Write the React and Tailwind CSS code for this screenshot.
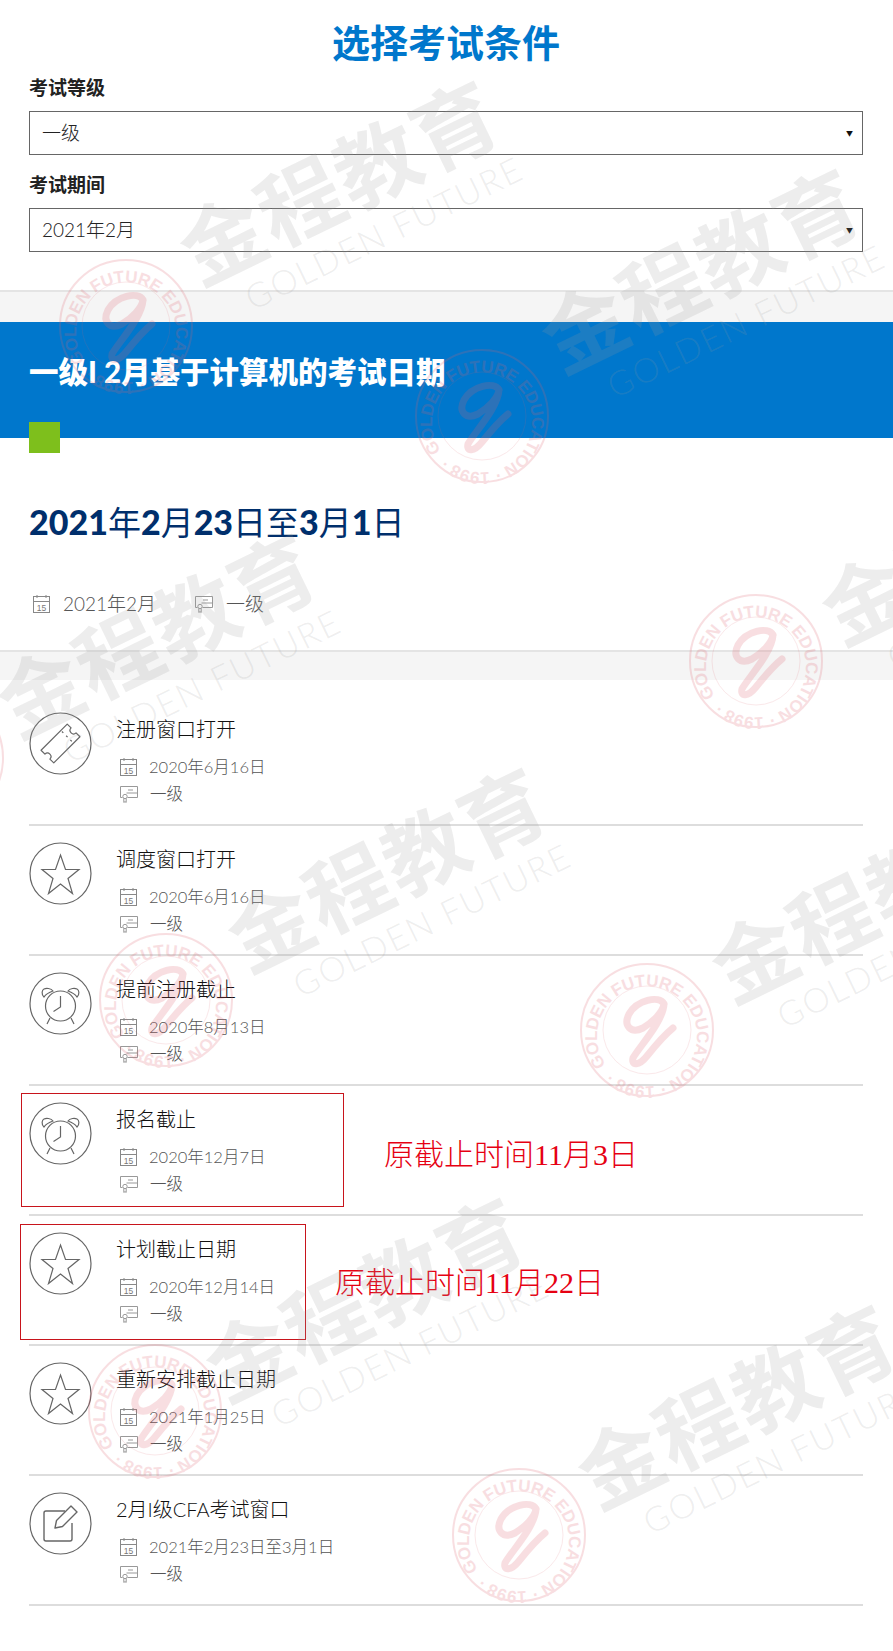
import React from "react";

const rows = [
  { icon: "ticket", title: "注册窗口打开", date: "2020年6月16日" },
  { icon: "star", title: "调度窗口打开", date: "2020年6月16日" },
  { icon: "alarm", title: "提前注册截止", date: "2020年8月13日" },
  { icon: "alarm", title: "报名截止", date: "2020年12月7日" },
  { icon: "star", title: "计划截止日期", date: "2020年12月14日" },
  { icon: "star", title: "重新安排截止日期", date: "2021年1月25日" },
  { icon: "edit", title: "2月I级CFA考试窗口", date: "2021年2月23日至3月1日" },
];

const marks = [
  "left-[348px] top-[200px]",
  "left-[710px] top-[288px]",
  "left-[166px] top-[653px]",
  "left-[396px] top-[887px]",
  "left-[990px] top-[560px]",
  "left-[880px] top-[918px]",
  "left-[374px] top-[1317px]",
  "left-[746px] top-[1424px]",
];

const stamps = [
  "left-[58px] top-[258px]",
  "left-[414px] top-[348px]",
  "left-[688px] top-[593px]",
  "left-[-131px] top-[690px]",
  "left-[98px] top-[932px]",
  "left-[579px] top-[962px]",
  "left-[87px] top-[1343px]",
  "left-[451px] top-[1467px]",
];

const CalendarIcon = () => (
  <svg width="19" height="20" viewBox="0 0 19 20" fill="none" stroke="#888" strokeWidth="1" className="shrink-0">
    <rect x="1.5" y="2.5" width="16" height="16" />
    <path d="M1.5 7.5h16M5 1v3M14 1v3" />
    <text x="9.5" y="16.500" fontSize="8.500" textAnchor="middle" fill="#777" stroke="none" fontFamily="Liberation Sans, sans-serif">15</text>
  </svg>
);

const CertIcon = () => (
  <svg width="20" height="18" viewBox="0 0 20 18" fill="none" stroke="#999" strokeWidth="1" className="shrink-0">
    <path d="M3.500 12.500H1.500V1.500h17v11H8.500" />
    <path d="M9 5h5M7.500 8h11" />
    <circle cx="6" cy="11.500" r="2.200" />
    <path d="M4.800 13.500v4l1.200-1 1.200 1v-4" />
  </svg>
);

const RoundIcon = ({ type }) => (
  <svg width="63" height="63" viewBox="0 0 63 63" fill="none" stroke="#666" strokeWidth="1.2" className="shrink-0">
    <circle cx="31.5" cy="31.5" r="30.5" />
    {type === "ticket" && (
      <g transform="rotate(-45 31.5 31.5)">
        <path d="M13 22.500h37v5.500a3.500 3.500 0 0 0 0 7v5.500H13V35a3.500 3.500 0 0 0 0-7z" strokeLinejoin="round" />
        <path d="M41 24v15" strokeDasharray="2 4" />
      </g>
    )}
    {type === "star" && (
      <path d="M31.5 13l5 14.500h13.500l-11 9 4.500 15-12-9.500-12 9.500 4.500-15-11-9h13.500z" strokeLinejoin="miter" />
    )}
    {type === "alarm" && (
      <g>
        <circle cx="31.5" cy="34" r="15" />
        <path d="M31.5 24v11l-7 4.500" />
        <path d="M15 25c-3-3-2-7 0-8s7-1 9 2c-3 1-7 3-9 6zM48 25c3-3 2-7 0-8s-7-1-9 2c3 1 7 3 9 6z" />
        <path d="M21 46l-3 6M42 46l3 6" />
      </g>
    )}
    {type === "edit" && (
      <g strokeLinejoin="round">
        <path d="M36 19H17a2 2 0 0 0-2 2v26a2 2 0 0 0 2 2h24a2 2 0 0 0 2-2V31" strokeWidth="1.4" />
        <path d="M26 36l1.500-7.500L42 14l6 6-14.500 14.500z" strokeWidth="1.4" />
      </g>
    )}
  </svg>
);

const Select = ({ value }) => (
  <div className="h-[44px] border border-[#666] flex items-center justify-between pl-[12px] pr-[9px] text-[19px] font-light text-[#222]">
    <span>{value}</span>
    <span className="text-[7px] text-[#111]">▼</span>
  </div>
);

const Watermark = ({ pos }) => (
  <div className={`absolute ${pos} -translate-x-1/2 -translate-y-1/2 rotate-[-26deg] flex flex-col items-center whitespace-nowrap text-[#999]/[.18]`}>
    <span className="text-[84px] leading-none font-bold tracking-[2px]">金程教育</span>
    <span className="text-[34px] leading-none tracking-[2px] mt-[6px] ml-[36px] font-light">GOLDEN FUTURE</span>
  </div>
);

const Stamp = ({ pos, id }) => (
  <svg width="136" height="136" viewBox="0 0 136 136" fill="none" className={`absolute ${pos} opacity-20`}>
    <circle cx="68" cy="68" r="66" stroke="#e0606c" strokeWidth="2" />
    <circle cx="68" cy="68" r="44" stroke="#e0606c" strokeWidth="0.7" />
    <defs>
      <path id={id} d="M27 103A50 50 0 1 1 109 103A50 50 0 0 1 27 103" />
    </defs>
    <text fontSize="17" fontWeight="700" fill="#e0606c" fontFamily="Liberation Sans, sans-serif">
      <textPath href={`#${id}`} textLength="305">GOLDEN FUTURE EDUCATION · 1998 ·</textPath>
    </text>
    <path d="M85 42C80 33 58 38 50 52C44 64 52 72 64 66C74 60 84 50 85 42C84 60 60 85 54 96C52 104 60 104 68 94C76 84 84 74 94 66" stroke="#e0606c" strokeWidth="7" strokeLinecap="round" strokeLinejoin="round" />
  </svg>
);

const App = () => {
  return (
    <div className="relative w-[893px] h-[1651px] overflow-hidden bg-white text-[#222] font-['Lato','Noto_Sans_CJK_SC',sans-serif]">
      {/* Exam filter */}
      <section className="pl-[29px] pr-[30px] h-[290px]">
        <h1 className="text-center text-[38px] leading-[43px] font-bold text-[#0077cc] pt-[21px] h-[65px]">选择考试条件</h1>
        <div className="text-[19px] leading-[24px] font-bold mt-[11px]">考试等级</div>
        <div className="mt-[11px]"><Select value="一级" /></div>
        <div className="text-[19px] leading-[24px] font-bold mt-[18px]">考试期间</div>
        <div className="mt-[11px]"><Select value="2021年2月" /></div>
      </section>

      <div className="h-[32px] bg-[#f5f5f5] border-t-2 border-[#e4e4e4]" />

      {/* Blue banner */}
      <section className="relative h-[116px] bg-[#0077cc] px-[29px] pt-[32px]">
        <h2 className="text-[29.500px] leading-[36px] font-black text-white">一级I 2月基于计算机的考试日期</h2>
        <div className="absolute left-[29px] top-[100px] w-[31px] h-[31px] bg-[#7ebf1c]" />
      </section>

      {/* Exam date */}
      <section className="h-[212px] px-[29px] pt-[60px]">
        <h3 className="text-[33px] leading-[48px] font-normal text-[#002f6c]">
          <span className="font-black text-[34px]">2021</span>年<span className="font-black text-[34px]">2</span>月<span className="font-black text-[34px]">23</span>日至<span className="font-black text-[34px]">3</span>月<span className="font-black text-[34px]">1</span>日
        </h3>
        <div className="flex items-center mt-[45px] pl-[3px] text-[19px] font-light leading-[26px] text-[#555]">
          <CalendarIcon />
          <span className="ml-[12px]">2021年2月</span>
          <span className="ml-[38px]"><CertIcon /></span>
          <span className="ml-[12px]">一级</span>
        </div>
      </section>

      <div className="h-[30px] bg-[#f5f5f5] border-t-2 border-[#e4e4e4]" />

      {/* Timeline rows */}
      <section className="pl-[29px] pr-[30px] pt-[16px]">
        {rows.map((row) => (
          <div key={row.title + row.date} className="h-[130px] border-b-2 border-[#ddd] flex pt-[16px]">
            <RoundIcon type={row.icon} />
            <div className="ml-[24px]">
              <div className="text-[20px] leading-[26px] font-light text-[#111] mt-[4px]">{row.title}</div>
              <div className="flex items-center mt-[12px] pl-[3px] text-[16.500px] font-light leading-[26px] text-[#555]">
                <CalendarIcon />
                <span className="ml-[11px]">{row.date}</span>
              </div>
              <div className="flex items-center mt-[1px] pl-[3px] text-[16.500px] font-light leading-[26px] text-[#555]">
                <CertIcon />
                <span className="ml-[11px]">一级</span>
              </div>
            </div>
          </div>
        ))}
      </section>

      {/* Annotations */}
      <div className="absolute left-[21px] top-[1093px] w-[323px] h-[114px] border border-[#c8141c]" />
      <div className="absolute left-[20px] top-[1224px] w-[286px] h-[116px] border border-[#c8141c]" />
      <div className="absolute left-[384px] top-[1136px] text-[30px] leading-[38px] font-light text-[#e60012] font-['Liberation_Serif','Noto_Sans_CJK_SC',serif]">原截止时间11月3日</div>
      <div className="absolute left-[335px] top-[1264px] text-[30px] leading-[38px] font-light text-[#e60012] font-['Liberation_Serif','Noto_Sans_CJK_SC',serif]">原截止时间11月22日</div>

      {/* Watermarks */}
      <div className="absolute inset-0 pointer-events-none">
        {marks.map((pos) => (
          <Watermark key={pos} pos={pos} />
        ))}
        {stamps.map((pos, i) => (
          <Stamp key={pos} pos={pos} id={`stamp-${i}`} />
        ))}
      </div>
    </div>
  );
};

export default App;
